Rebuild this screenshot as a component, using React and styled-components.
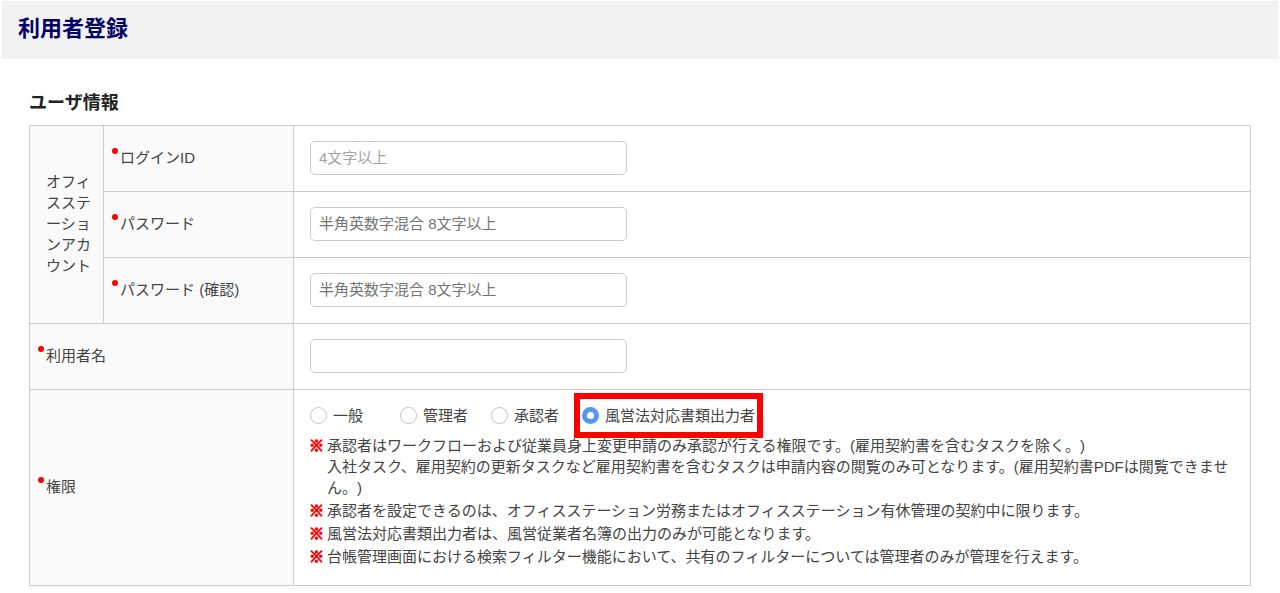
import React, { useState } from "react";
import styled, { createGlobalStyle, css } from "styled-components";

const GlobalStyle = createGlobalStyle`
  * { box-sizing: border-box; }
  body {
    margin: 0;
    background: #fff;
    color: #444;
    font-family: "Liberation Sans", "Noto Sans CJK JP", sans-serif;
    font-size: 15px;
    line-height: 21px;
    text-spacing-trim: space-all;
  }
`;

const PageHeader = styled.header`
  margin: 1px 1px 0 2px;
  padding: 13px 16px 15px;
  background: #f2f2f2;
`;

const PageTitle = styled.h1`
  margin: 0;
  color: #000066;
  font-size: 22px;
  line-height: 30px;
`;

const Content = styled.main`
  padding: 31px 29px 7px;
`;

const SectionTitle = styled.h2`
  margin: 0 0 9px;
  color: #222;
  font-size: 18px;
  line-height: 26px;
`;

const FormTable = styled.table`
  width: 100%;
  border-collapse: collapse;
  table-layout: fixed;
`;

const GroupColumn = styled.col`
  width: 74px;
`;

const LabelColumn = styled.col`
  width: 190px;
`;

const cell = css`
  border: 1px solid #ccc;
  text-align: left;
  vertical-align: middle;
`;

const HeadCell = styled.th`
  ${cell}
  padding: 13px 12px 15px 16px;
  background: #fafafa;
  font-weight: normal;
`;

const DataCell = styled.td`
  ${cell}
  padding: 15px 15px 16px 16px;
`;

const RequiredMark = styled.span`
  position: relative;
  &::before {
    content: "";
    position: absolute;
    top: -1px;
    left: -8px;
    width: 6px;
    height: 6px;
    border-radius: 50%;
    background: #f00;
  }
`;

const TextInput = styled.input`
  display: block;
  width: 317px;
  max-width: 100%;
  height: 34px;
  padding: 0 8px 1px;
  border: 1px solid #ccc;
  border-radius: 5px;
  background: #fff;
  color: #444;
  font: inherit;
  &::placeholder {
    color: ${(p) => (p.$faint ? "#a3a3a3" : "#757575")};
    opacity: 1;
  }
`;

const RadioRow = styled.div`
  display: flex;
  flex-wrap: wrap;
  align-items: center;
  gap: 23px;
`;

const RadioLabel = styled.label`
  position: relative;
  display: flex;
  align-items: center;
  gap: 6px;
  min-width: 67px;
  ${(p) =>
    p.$marked &&
    css`
      &::after {
        content: "";
        position: absolute;
        inset: -12px -8px;
        border: 6px solid #f00;
        pointer-events: none;
      }
    `}
`;

const Radio = styled.input`
  appearance: none;
  flex: none;
  width: 17px;
  height: 17px;
  margin: 0;
  border: 1px solid #c4c4c4;
  border-radius: 50%;
  background: #fff;
  &:checked {
    border: 5px solid #5596f0;
  }
`;

const Notes = styled.ul`
  display: flex;
  flex-direction: column;
  gap: 2px;
  margin: 9px 0 2px;
  padding: 0;
  list-style: none;
`;

const Note = styled.li`
  display: flex;
  gap: 3px;
  &::before {
    content: "※";
    flex: none;
    margin-left: -1px;
    color: #f00;
    font-weight: bold;
    -webkit-text-stroke: 1px #f00;
  }
`;

const roles = ["一般", "管理者", "承認者", "風営法対応書類出力者"];

function Field({ id, label, span, ...input }) {
  return (
    <>
      <HeadCell scope="row" colSpan={span}>
        <RequiredMark>
          <label htmlFor={id}>{label}</label>
        </RequiredMark>
      </HeadCell>
      <DataCell>
        <TextInput id={id} {...input} />
      </DataCell>
    </>
  );
}

export default function App() {
  const [role, setRole] = useState(roles[3]);

  return (
    <>
      <GlobalStyle />
      <PageHeader>
        <PageTitle>利用者登録</PageTitle>
      </PageHeader>
      <Content>
        <SectionTitle>ユーザ情報</SectionTitle>
        <FormTable>
          <colgroup>
            <GroupColumn />
            <LabelColumn />
            <col />
          </colgroup>
          <tbody>
            <tr>
              <HeadCell scope="rowgroup" rowSpan={3}>
                オフィスステーションアカウント
              </HeadCell>
              <Field id="login" label="ログインID" type="text" placeholder="4文字以上" $faint />
            </tr>
            <tr>
              <Field id="password" label="パスワード" type="password" placeholder="半角英数字混合 8文字以上" />
            </tr>
            <tr>
              <Field id="confirm" label="パスワード (確認)" type="password" placeholder="半角英数字混合 8文字以上" />
            </tr>
            <tr>
              <Field id="name" label="利用者名" span={2} type="text" />
            </tr>
            <tr>
              <HeadCell scope="row" colSpan={2}>
                <RequiredMark id="role-label">権限</RequiredMark>
              </HeadCell>
              <DataCell>
                <RadioRow role="radiogroup" aria-labelledby="role-label">
                  {roles.map((name) => (
                    <RadioLabel key={name} $marked={name === roles[3]}>
                      <Radio
                        type="radio"
                        name="role"
                        checked={role === name}
                        onChange={() => setRole(name)}
                      />
                      {name}
                    </RadioLabel>
                  ))}
                </RadioRow>
                <Notes>
                  <Note>
                    <span>
                      承認者はワークフローおよび従業員身上変更申請のみ承認が行える権限です。(雇用契約書を含むタスクを除く。)
                      <br />
                      入社タスク、雇用契約の更新タスクなど雇用契約書を含むタスクは申請内容の閲覧のみ可となります。(雇用契約書PDFは閲覧できません。)
                    </span>
                  </Note>
                  <Note>
                    承認者を設定できるのは、オフィスステーション労務またはオフィスステーション有休管理の契約中に限ります。
                  </Note>
                  <Note>風営法対応書類出力者は、風営従業者名簿の出力のみが可能となります。</Note>
                  <Note>
                    台帳管理画面における検索フィルター機能において、共有のフィルターについては管理者のみが管理を行えます。
                  </Note>
                </Notes>
              </DataCell>
            </tr>
          </tbody>
        </FormTable>
      </Content>
    </>
  );
}
